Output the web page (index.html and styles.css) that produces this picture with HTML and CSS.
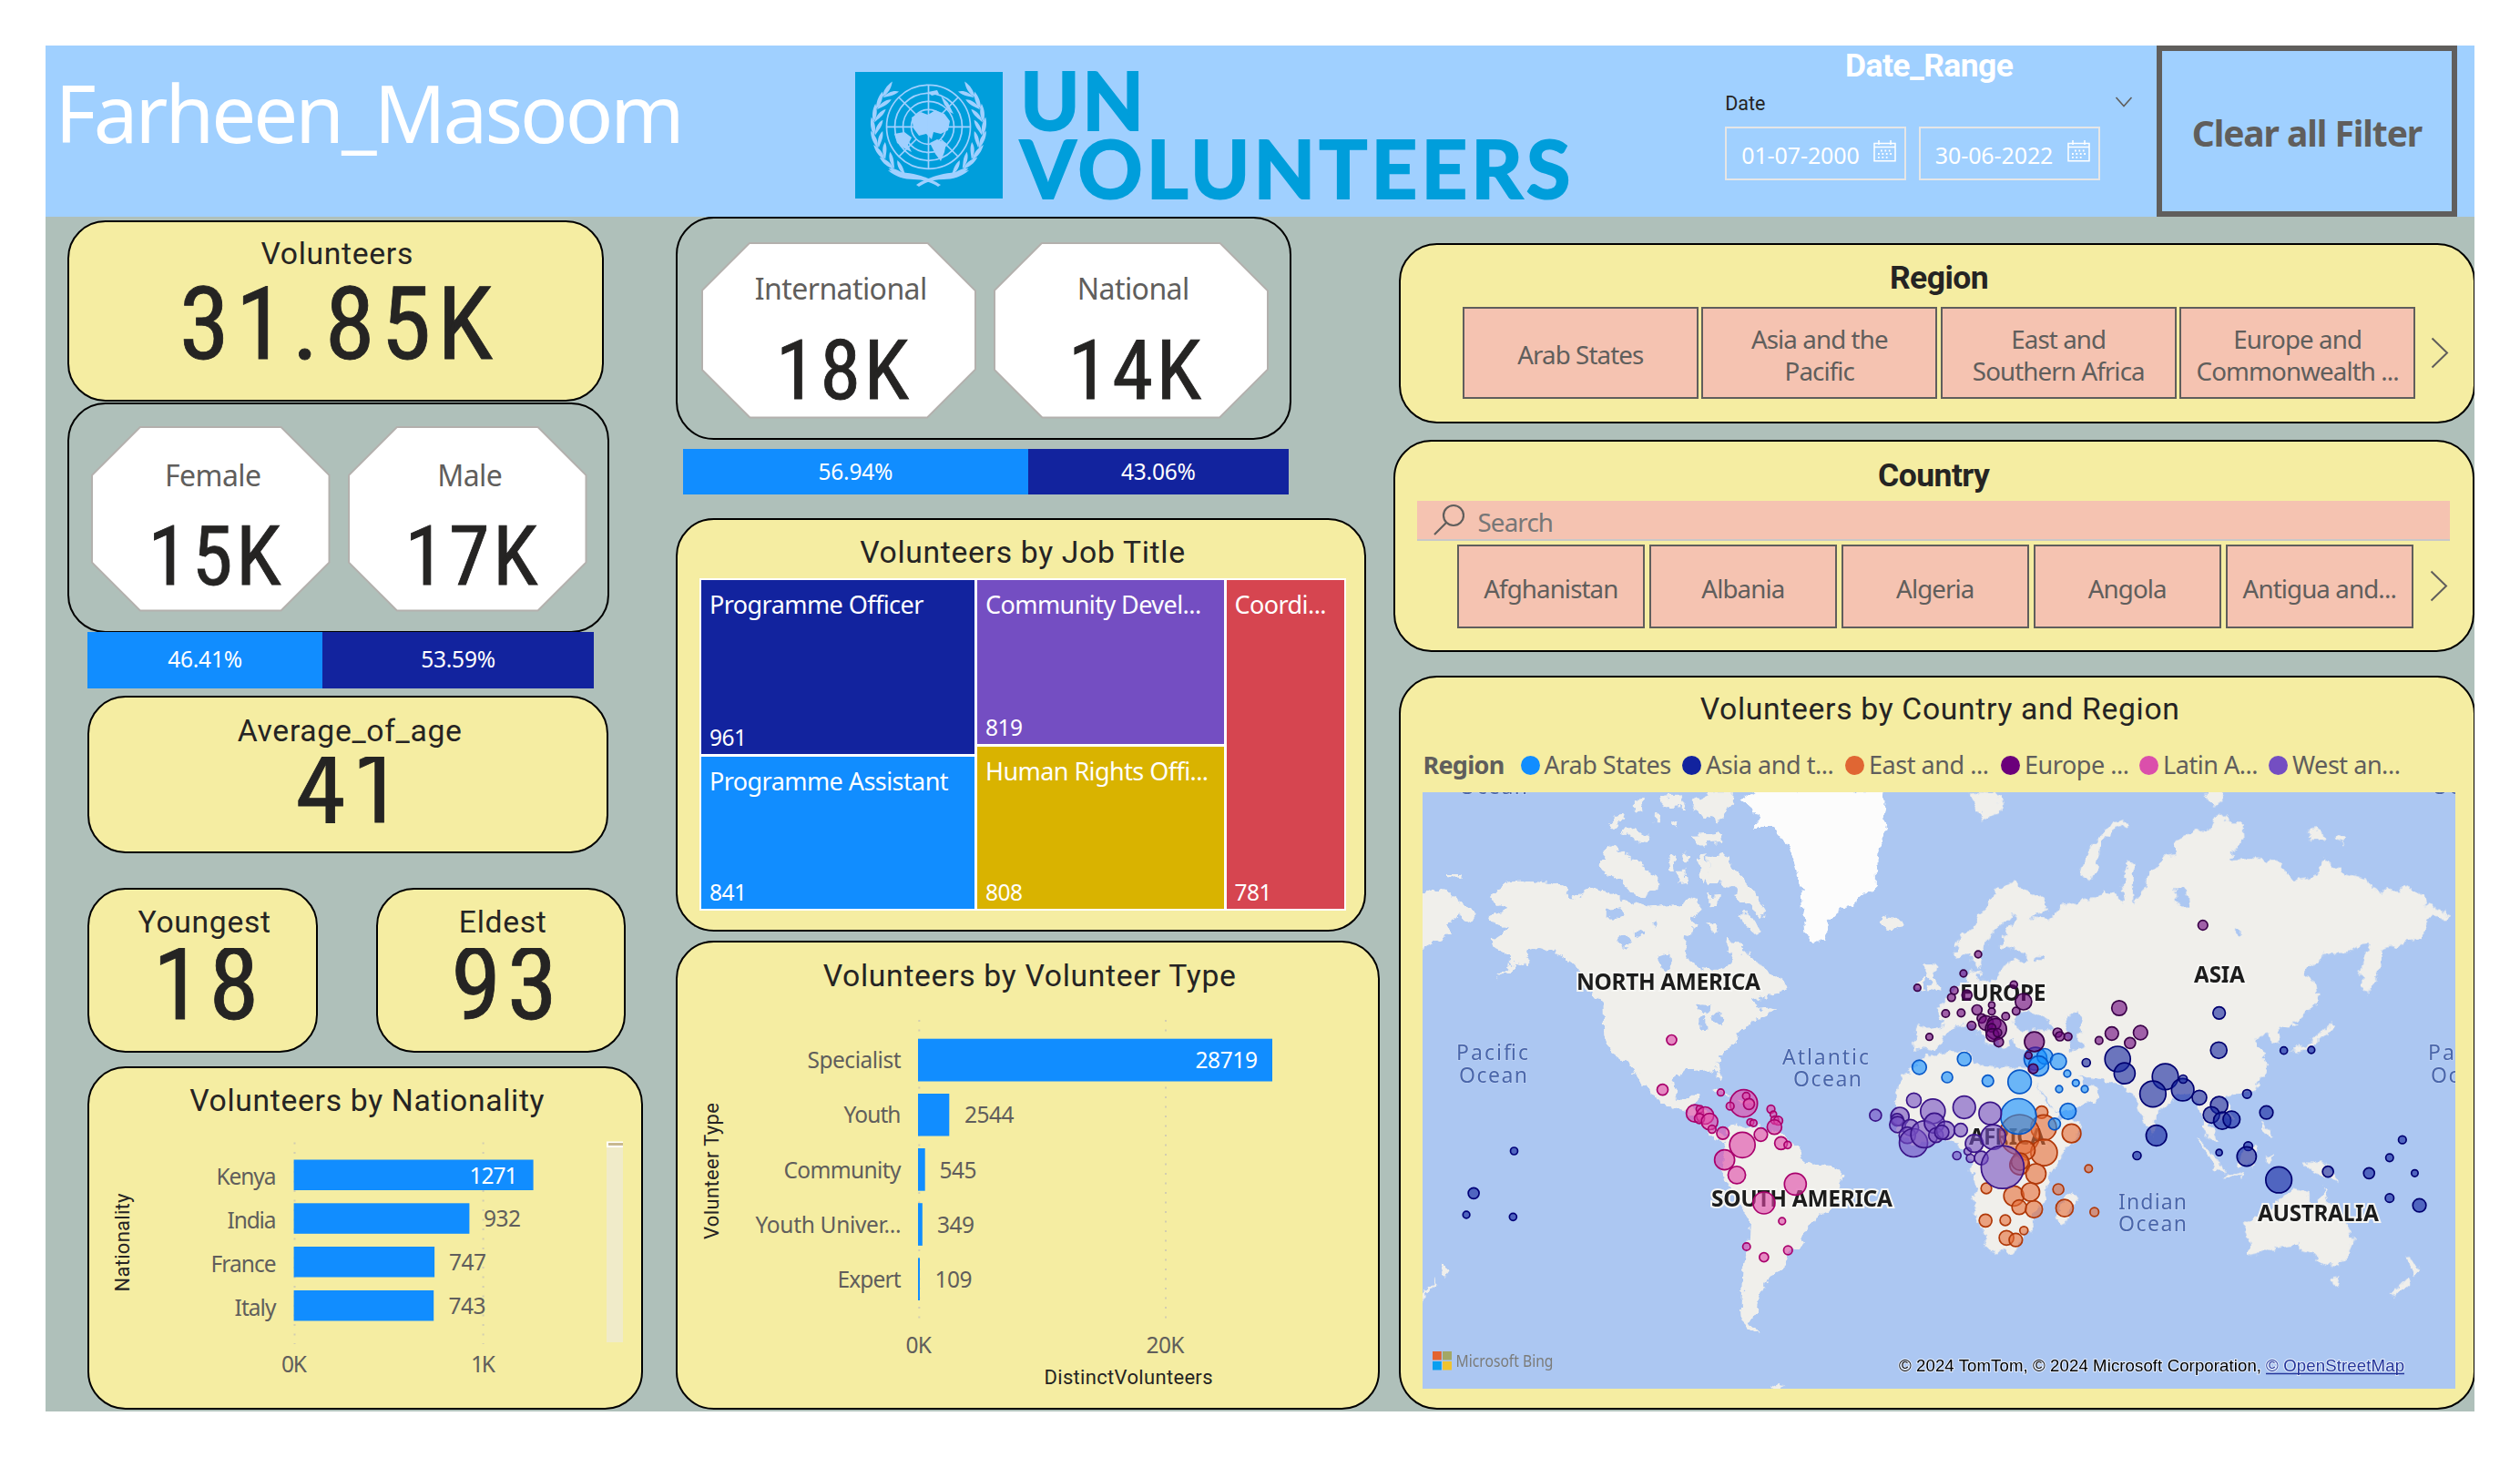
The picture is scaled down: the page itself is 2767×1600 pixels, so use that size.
FILE: index.html
```html
<!DOCTYPE html>
<html lang="en">
<head>
<meta charset="utf-8">
<title>UN Volunteers</title>
<link rel="stylesheet" href="styles.css">
</head>
<body>
<main class="report">
  <header class="header">
    <h1 class="owner">Farheen_Masoom</h1>
    <div class="logo">
      <svg class="emblem" viewBox="0 0 162 139">
        <rect width="162" height="139" fill="#009edb"/>
        <defs>
          <path id="leaf" d="M22 76 C18 70 16 64 17 56 C22 62 24 69 22 76Z M23 76 C26 70 30 66 30 58 C25 61 22 68 23 76Z"/>
          <g id="branch">
            <use href="#leaf" transform="rotate(48 80 60)"/>
            <use href="#leaf" transform="rotate(34 80 60)"/>
            <use href="#leaf" transform="rotate(20 80 60)"/>
            <use href="#leaf" transform="rotate(6 80 60)"/>
            <use href="#leaf" transform="rotate(-8 80 60)"/>
            <use href="#leaf" transform="rotate(-22 80 60)"/>
            <use href="#leaf" transform="rotate(-36 80 60)"/>
            <use href="#leaf" transform="rotate(-50 80 60)"/>
            <path d="M36 108 C50 110 62 111 72 114 C82 117 90 121 94 124 L91 126 C84 121 74 118 64 118 C54 118 44 115 36 108Z"/>
          </g>
        </defs>
        <g fill="#a0d0ff">
          <use href="#branch"/>
          <use href="#branch" transform="matrix(-1 0 0 1 161 0)"/>
          <path d="M62 50 L72 44 80 47 88 42 98 46 104 54 102 64 94 68 86 66 84 74 78 68 70 70 64 62Z M43 68 L54 66 62 72 58 80 62 88 54 84 46 78Z M82 78 L90 74 100 78 98 88 94 98 88 90Z M94 26 L102 34 108 46 104 44 98 36Z M80 22 L90 20 92 24 84 26Z"/>
        </g>
        <g fill="none" stroke="#a0d0ff" stroke-width="1.7">
          <circle cx="80.5" cy="60.3" r="46"/><circle cx="80.5" cy="60.3" r="37"/><circle cx="80.5" cy="60.3" r="28"/><circle cx="80.5" cy="60.3" r="19"/>
          <path d="M80.5 14V107M34 60.3H127M48 28L67 47M113 28L94 47M48 93L67 74M113 93L94 74"/>
        </g>
      </svg>
      <div class="wordmark"><span>UN</span><span class="wide">VOLUNTEERS</span></div>
    </div>
    <section class="dates">
      <h2 class="slicer-title light">Date_Range</h2>
      <div class="dates-field"><span>Date</span>
        <svg width="20" height="12" viewBox="0 0 20 12"><path d="M1.5 1L10 10.5L18.5 1" fill="none" stroke="#605e5c" stroke-width="1.6"/></svg>
      </div>
      <div class="dates-inputs">
        <div class="date-input"><span>01-07-2000</span><svg class="calendar" viewBox="0 0 25 24"><path d="M1 3.5H24V22.800H1ZM1 7.500H24M6 0V5M19 0V5" fill="none" stroke="#fff" stroke-width="1.500"/><path d="M8 11.500H21M5 15H21M5 18.800H17" stroke="#fff" stroke-width="1.800" stroke-dasharray="1.800 2.600"/></svg></div>
        <div class="date-input"><span>30-06-2022</span><svg class="calendar" viewBox="0 0 25 24"><path d="M1 3.5H24V22.800H1ZM1 7.500H24M6 0V5M19 0V5" fill="none" stroke="#fff" stroke-width="1.500"/><path d="M8 11.500H21M5 15H21M5 18.800H17" stroke="#fff" stroke-width="1.800" stroke-dasharray="1.800 2.600"/></svg></div>
      </div>
    </section>
    <button class="clear">Clear all Filter</button>
  </header>

  <div class="columns">
    <div class="col col-left">
      <section class="card volunteers">
        <h2 class="title">Volunteers</h2>
        <p class="figure">31.85K</p>
      </section>
      <section class="card plain gender">
        <div class="octagon"><span class="oct-label">Female</span><span class="oct-value">15K</span></div>
        <div class="octagon"><span class="oct-label">Male</span><span class="oct-value">17K</span></div>
      </section>
      <div class="split split-gender"><span style="flex-grow:46.41">46.41%</span><span style="flex-grow:53.59">53.59%</span></div>
      <section class="card average">
        <h2 class="title">Average_of_age</h2>
        <p class="figure cut">41</p>
      </section>
      <div class="ages">
        <section class="card youngest"><h2 class="title">Youngest</h2><p class="figure cut">18</p></section>
        <section class="card eldest"><h2 class="title">Eldest</h2><p class="figure cut">93</p></section>
      </div>
      <section class="card nationality">
        <h2 class="title">Volunteers by Nationality</h2>
        <svg class="chart" viewBox="98 1230 606 316">
          <path class="grid" d="M323.500 1254.600V1476M530.600 1254.600V1476"/>
          <g fill="#118dff">
            <rect x="322.600" y="1273.500" width="263" height="33.500"/>
            <rect x="322.600" y="1321.300" width="192.800" height="33.500"/>
            <rect x="322.600" y="1369" width="154.500" height="33.500"/>
            <rect x="322.600" y="1417" width="153.600" height="33.500"/>
          </g>
          <g class="axis" text-anchor="end">
            <text x="303.500" y="1301" textLength="66">Kenya</text>
            <text x="303.500" y="1348.700" textLength="54">India</text>
            <text x="303.500" y="1396.500" textLength="72">France</text>
            <text x="303.500" y="1444.800" textLength="46">Italy</text>
          </g>
          <g class="axis">
            <text x="515.500" y="1299.500" textLength="53" fill="#fff">1271</text>
            <text x="531" y="1347" textLength="41">932</text>
            <text x="493" y="1395" textLength="41">747</text>
            <text x="492.500" y="1442.700" textLength="41">743</text>
            <text x="309" y="1506.500" textLength="28">0K</text>
            <text x="517" y="1506.500" textLength="27">1K</text>
          </g>
          <text class="axis-title" transform="translate(142 1418.500) rotate(-90)" textLength="108">Nationality</text>
          <rect x="666" y="1260" width="18" height="214" fill="#f0ebc9"/>
          <path d="M666 1253.500H684V1260H666Z" fill="#fff"/><path d="M668 1255H684V1258H668Z" fill="#c8b890"/>
        </svg>
      </section>
    </div>

    <div class="col col-middle">
      <section class="card plain scope">
        <div class="octagon big"><span class="oct-label">International</span><span class="oct-value">18K</span></div>
        <div class="octagon big"><span class="oct-label">National</span><span class="oct-value">14K</span></div>
      </section>
      <div class="split split-scope"><span style="flex-grow:56.94">56.94%</span><span style="flex-grow:43.06">43.06%</span></div>
      <section class="card jobs">
        <h2 class="title">Volunteers by Job Title</h2>
        <div class="treemap">
          <div class="tree-col one"><div class="cell navy"><span>Programme Officer</span><b>961</b></div><div class="cell blue"><span>Programme Assistant</span><b>841</b></div></div>
          <div class="tree-col two"><div class="cell violet"><span>Community Devel...</span><b>819</b></div><div class="cell gold"><span>Human Rights Offi...</span><b>808</b></div></div>
          <div class="tree-col three"><div class="cell red"><span>Coordi...</span><b>781</b></div></div>
        </div>
      </section>
      <section class="card types">
        <h2 class="title">Volunteers by Volunteer Type</h2>
        <svg class="chart" viewBox="744 1095 769 450">
          <path class="grid" d="M1009.300 1120V1455M1280 1120V1455"/>
          <g fill="#118dff">
            <rect x="1008" y="1140.700" width="389" height="46.800"/>
            <rect x="1008" y="1201" width="34.300" height="46.500"/>
            <rect x="1008" y="1261" width="7.700" height="46.700"/>
            <rect x="1008" y="1321.200" width="4.800" height="46.700"/>
            <rect x="1008" y="1381.400" width="2" height="46.600"/>
          </g>
          <g class="axis" text-anchor="end">
            <text x="989.500" y="1173.300" textLength="103">Specialist</text>
            <text x="989.500" y="1233.300" textLength="63">Youth</text>
            <text x="989.500" y="1293.700" textLength="129">Community</text>
            <text x="989.500" y="1354" textLength="160">Youth Univer...</text>
            <text x="989.500" y="1414" textLength="70">Expert</text>
          </g>
          <g class="axis">
            <text x="1312.500" y="1173.300" textLength="68.500" fill="#fff">28719</text>
            <text x="1059" y="1233.300" textLength="54.500">2544</text>
            <text x="1031.500" y="1293.700" textLength="41">545</text>
            <text x="1029" y="1354" textLength="41">349</text>
            <text x="1026.500" y="1414" textLength="41">109</text>
            <text x="994.500" y="1485.500" textLength="28.500">0K</text>
            <text x="1258.500" y="1485.500" textLength="42">20K</text>
          </g>
          <text class="axis-title" transform="translate(788.500 1361) rotate(-90)" textLength="150">Volunteer Type</text>
          <text class="axis-title" x="1146.500" y="1520" textLength="185">DistinctVolunteers</text>
        </svg>
      </section>
    </div>

    <div class="col col-right">
      <section class="card region">
        <h2 class="slicer-title">Region</h2>
        <div class="tiles">
          <span>Arab States</span><span>Asia and the<br>Pacific</span><span>East and<br>Southern Africa</span><span>Europe and<br>Commonwealth ...</span>
          <svg class="next" viewBox="0 0 20 35"><path d="M1.500 1.500L18 17.500L1.500 33.500" fill="none" stroke="#605e5c" stroke-width="2"/></svg>
        </div>
      </section>
      <section class="card country">
        <h2 class="slicer-title">Country</h2>
        <div class="search">
          <svg width="34" height="36" viewBox="0 0 34 36"><circle cx="22" cy="13" r="11" fill="none" stroke="#605e5c" stroke-width="2.200"/><path d="M14 21L1 34" stroke="#605e5c" stroke-width="2.200"/></svg>
          <span>Search</span>
        </div>
        <div class="tiles five">
          <span>Afghanistan</span><span>Albania</span><span>Algeria</span><span>Angola</span><span>Antigua and...</span>
          <svg class="next" viewBox="0 0 20 35"><path d="M1.500 1.500L18 17.500L1.500 33.500" fill="none" stroke="#605e5c" stroke-width="2"/></svg>
        </div>
      </section>
      <section class="card world">
        <h2 class="title">Volunteers by Country and Region</h2>
        <div class="legend">
          <strong>Region</strong>
          <span><i class="k-arab"></i>Arab States</span><span><i class="k-asia"></i>Asia and t...</span><span><i class="k-east"></i>East and ...</span><span><i class="k-europe"></i>Europe ...</span><span><i class="k-latin"></i>Latin A...</span><span><i class="k-west"></i>West an...</span>
        </div>
        <svg class="map" id="map" viewBox="0 0 1134 655">
          <defs>
            <filter id="coast" x="0" y="0" width="1134" height="655" filterUnits="userSpaceOnUse">
              <feTurbulence type="fractalNoise" baseFrequency="0.09" numOctaves="3" seed="4"/>
              <feDisplacementMap in="SourceGraphic" scale="13" xChannelSelector="R" yChannelSelector="G"/>
              <feGaussianBlur stdDeviation="0.6"/>
            </filter>
          </defs>
          <rect width="1134" height="655" fill="#acc7f2"/>
          <g filter="url(#coast)">
            <g fill="#f0efeb" transform="translate(-12 -10) scale(.38265 .33333)">
              <path d="M225 380L245 350 285 325 330 322 400 330 440 350 465 380 480 370 510 350 540 355 580 365 600 380 640 395 680 410 720 405 760 400 800 375 820 385 830 420 800 450 820 470 790 500 785 550 800 590 840 610 880 615 905 610 920 590 905 550 910 515 935 520 960 560 975 585 1010 600 1030 620 1060 650 1075 670 1060 690 1020 700 980 720 1000 740 1040 735 1020 770 980 780 960 810 935 825 925 860 890 895 872 915 875 940 888 975 882 985 870 950 850 938 810 945 780 945 757 965 750 1000 760 1035 790 1045 805 1025 828 1025 825 1050 800 1068 850 1075 860 1090 862 1135 880 1150 900 1165 925 1150 925 1165 895 1185 865 1165 840 1130 800 1090 770 1080 740 1065 700 1040 690 1020 650 975 630 940 610 915 570 880 552 830 550 720 520 700 490 650 470 600 440 570 400 550 370 540 340 550 325 600 300 590 285 615 240 640 290 590 290 570 240 540 225 520 265 490 275 470 220 455 225 435 270 420Z"/>
              <path d="M20 370L60 345 100 350 125 380 165 410 185 430 170 455 130 430 105 470 110 500 70 520 20 550Z"/>
              <path d="M548 225L570 205 610 225 650 265 690 290 715 330 700 345 660 375 630 360 600 320 560 305 545 280Z"/>
              <path d="M850 250L900 235 935 290 960 330 990 370 1020 420 1000 440 960 400 920 340 880 330 850 330Z"/>
              <path d="M940 430L970 430 1005 490 990 500 950 460Z M820 240L845 235 855 320 830 330Z M760 290L785 290 790 330 765 335Z M730 240L750 235 755 290 735 285Z M780 230L805 230 800 260 785 262Z M850 370L880 365 875 410 850 405Z M845 460L870 460 880 495 855 490Z"/>
              <path d="M800 60L860 28 925 28 920 70 905 90 880 130 840 120 820 90Z M810 170L880 165 890 195 820 200Z M640 55L660 50 665 90 640 95Z M565 140L600 95 610 110 580 150Z M600 160L640 150 690 180 680 195 640 190Z M710 45L770 40 790 80 740 85 715 70Z M700 100L720 95 715 130 700 130Z M740 120L770 130 760 150 740 145Z"/>
              <path d="M1475 600L1495 595 1492 630 1515 680 1505 692 1478 685 1490 655 1475 640Z M1450 650L1470 640 1470 680 1448 685Z"/>
              <path d="M860 1008L910 1022 915 1030 870 1018Z M935 1040L985 1045 980 1060 940 1055Z M105 300L140 300 140 312 108 310Z"/>
              <path d="M895 1205L915 1130 940 1125 960 1140 1000 1130 1050 1150 1090 1180 1120 1210 1125 1250 1180 1255 1225 1275 1240 1300 1220 1345 1200 1410 1150 1440 1130 1480 1110 1535 1085 1545 1065 1600 1030 1620 1020 1650 1000 1700 990 1740 970 1775 1000 1818 980 1812 948 1775 945 1700 950 1600 965 1530 970 1440 930 1370 900 1310 890 1270Z"/>
              <path d="M92 1580L105 1600 90 1625 78 1615Z M70 1630L28 1690 30 1705 68 1650Z M1030 1990L1060 1970 1070 1990 1040 2000Z"/>
              <ellipse cx="1375" cy="460" rx="30" ry="24"/>
              <path fill="#fcfcfc" d="M945 55L985 25 1358 25 1350 110 1362 140 1340 220 1335 290 1335 345 1290 370 1260 400 1220 430 1195 460 1182 522 1150 525 1130 490 1125 430 1120 350 1095 260 1070 190 1040 150 980 150 1000 110Z"/>
            </g>
            <g fill="#f0efeb" transform="translate(488 -10) scale(.42535 .33333)">
              <path d="M125 830L130 795 190 810 195 780 175 740 190 730 215 700 235 680 260 660 262 625 285 620 295 655 330 645 345 620 360 595 405 580 405 558 350 545 345 500 370 480 385 440 372 430 345 470 320 500 305 540 300 580 285 610 270 590 265 560 240 580 228 560 240 500 275 475 290 430 315 390 340 345 375 325 415 355 460 385 470 420 440 430 420 440 470 450 490 430 500 400 545 390 600 380 615 350 640 375 665 395 658 300 675 255 690 270 692 400 720 330 725 290 755 270 760 240 800 230 795 195 850 160 885 155 905 95 935 130 970 130 972 180 945 220 930 250 1000 245 1065 255 1080 300 1110 315 1160 305 1180 245 1220 295 1290 320 1300 350 1340 360 1400 345 1440 370 1445 400 1505 435 1495 445 1460 440 1440 470 1435 510 1400 520 1360 540 1330 550 1320 640 1290 690 1275 680 1275 620 1290 560 1300 525 1280 530 1240 560 1180 560 1150 600 1130 635 1160 660 1165 700 1150 740 1120 770 1085 800 1060 820 1062 855 1045 850 1040 830 1010 835 1000 850 1020 880 1030 930 1020 980 1000 1005 960 1020 930 1030 920 1045 945 1080 938 1110 900 1100 885 1130 910 1185 895 1185 870 1140 865 1090 850 1060 830 1020 800 1025 775 1060 750 1090 745 1140 735 1160 720 1130 700 1060 690 1020 670 1000 620 980 580 975 545 965 560 990 600 1010 590 1040 540 1075 502 1092 480 1080 460 1030 425 970 420 935 425 890 385 875 380 840 365 870 345 862 330 850 300 800 318 830 325 855 310 862 280 810 260 795 225 800 200 830 185 868 160 880 125 870Z"/>
              <path d="M655 120L668 135 610 190 592 260 580 322 550 300 570 220 610 160Z M265 30L340 40 350 90 300 122 280 80Z M880 28L915 28 918 60 890 75Z M1145 155L1170 150 1180 185 1150 190Z M1210 175L1235 180 1230 195 1212 190Z"/>
              <path d="M1200 790L1204 805 1150 868 1110 885 1088 880 1140 860Z M1092 785L1112 795 1100 808Z M155 600L175 595 172 630 190 685 150 688 165 655Z"/>
              <path d="M150 895L200 890 262 880 275 920 330 940 400 930 425 950 440 1000 470 1065 502 1108 556 1105 548 1150 500 1230 465 1300 462 1370 425 1425 428 1465 402 1505 370 1545 318 1552 300 1485 270 1385 282 1330 265 1250 255 1205 200 1178 130 1195 82 1155 70 1100 75 1020 95 965 130 930Z"/>
              <path d="M530 1345L540 1360 515 1450 500 1460 488 1425 508 1370Z"/>
              <path d="M978 1450L1035 1420 1065 1380 1100 1340 1140 1350 1140 1385 1165 1400 1178 1330 1192 1370 1205 1400 1240 1460 1255 1500 1240 1570 1215 1595 1180 1590 1150 1550 1120 1540 1110 1518 1060 1528 1010 1550 990 1555 985 1500Z"/>
              <path d="M1195 1630L1220 1628 1212 1655 1198 1652Z M1395 1560L1425 1592 1410 1628 1402 1600Z M1392 1635L1350 1690 1365 1695 1400 1650Z M1120 1250L1170 1250 1205 1280 1215 1310 1180 1300 1140 1270Z M855 1175L880 1200 912 1250 922 1282 905 1275 880 1230Z M925 1283L970 1288 970 1297 925 1293Z M960 1230L1005 1185 1012 1210 1000 1262 965 1260Z M1020 1120L1040 1140 1045 1170 1025 1150Z M1030 1225L1050 1225 1035 1265 1028 1260Z"/>
              <g fill="#acc7f2">
                <path d="M375 795L385 760 420 745 440 760 472 792 478 812 440 812 400 822Z M505 772L540 755 560 780 545 830 562 870 530 880 515 830Z M795 350L825 350 830 405 800 400Z M950 475L965 480 965 510 950 505Z M438 570L455 570 455 585 440 585Z"/>
              </g>
            </g>
            <g fill="#acc7f2" transform="translate(-12 -10) scale(.38265 .33333)">
              <path d="M555 420L600 415 610 435 580 450Z M640 490L665 485 670 500 640 510Z M710 570L735 560 740 620 715 610Z M815 730L850 735 860 755 825 760Z M832 765L845 765 845 810 832 810Z M865 755L900 770 890 800 870 780Z M600 500L620 510 615 540 600 530Z M690 460L710 455 700 480Z"/>
            </g>
          </g>
          <g class="ocean">
            <text x="37" y="294" textLength="79">Pacific</text><text x="40" y="319" textLength="75">Ocean</text>
            <text x="395" y="298.500" textLength="95">Atlantic</text><text x="407" y="323" textLength="75">Ocean</text>
            <text x="764" y="457.500" textLength="75">Indian</text><text x="764" y="481.700" textLength="75">Ocean</text>
            <text x="1104" y="294" textLength="79">Pacific</text><text x="1107" y="319" textLength="75">Ocean</text>
            <text x="40" y="1.500" textLength="75">Ocean</text><text x="1108" y="1.500" textLength="75">Ocean</text>
          </g>
          <g class="continent">
            <text x="169" y="216.700" textLength="202">NORTH AMERICA</text>
            <text x="317" y="454.500" textLength="199">SOUTH AMERICA</text>
            <text x="590" y="228.700" textLength="94.500">EUROPE</text>
            <text x="847" y="208.700" textLength="56">ASIA</text>
            <text x="600" y="387.300" textLength="84">AFRICA</text>
            <text x="917" y="470.700" textLength="133">AUSTRALIA</text>
          </g>
          <g id="bubbles"></g>
          <path d="M11 614H20.800V623.500H11Z" fill="#e3632f"/><path d="M22 614H32V623.500H22Z" fill="#a3a765"/><path d="M11 625H20.800V634.500H11Z" fill="#0a9ff0"/><path d="M22 625H32V634.500H22Z" fill="#f0c330"/>
          <text class="bing" x="36.500" y="630.700" textLength="107" lengthAdjust="spacingAndGlyphs">Microsoft Bing</text>
          <g class="credit">
            <text x="523" y="636" textLength="398">© 2024 TomTom, © 2024 Microsoft Corporation,</text>
            <text class="link" x="926" y="636" textLength="152">© OpenStreetMap</text>
            <path d="M926 638.500H1078" stroke="#26379c" stroke-width="1.300"/>
          </g>
        </svg>
      </section>
    </div>
  </div>
</main>
<script src="bubbles.js"></script>
</body>
</html>
```
FILE: bubbles.js
```js
// Volunteer bubbles. Each hemisphere has its own grid: [x, y, radius in px].
const grids = {
  west: (x, y) => [x / 2.6133 - 12, y / 3 - 10],
  east: (x, y) => [x / 2.351 + 488, y / 3 - 10]
};
const layers = [
  { grid: 'west', fill: '#e044a7', line: '#a8006c', points: [
    [746,846,5.5],[720,1010,6],[887,1019,3.8],[953,1055,15],[960,1031,4],[968,1057,6],[914,1064,4.3],[813,1088,9.5],[827,1074,4],[842,1095,9.5],[826,1105,5.5],[855,1115,9],[862,1140,4.3],[893,1153,6.8],[972,1117,3.8],[981,1120,3.8],[1031,1074,4.3],[1038,1091,3.5],[1042,1110,4.3],[1052,1112,4.8],[1041,1133,8],[1002,1158,7.3],[1060,1186,7],[1079,1192,4],[949,1192,14],[898,1241,11],[933,1291,9.6],[1101,1321,12],[1011,1383,12],[1063,1443,3.8],[961,1527,4.2],[1080,1539,4.8],[1011,1562,5]] },
  { grid: 'west', fill: '#12239e', line: '#000078', points: [[294,1212,4],[178,1351,6],[157,1422,3.8],[291,1429,4]] },
  { grid: 'east', fill: '#e66c37', line: '#b03808', points: [
    [451,1084,6.8],[456,1135,14],[528,1154,10.3],[394,1158,22],[457,1217,14.5],[409,1210,10.5],[394,1258,10.8],[395,1247,9.5],[436,1287,11],[308,1335,5.8],[572,1270,4.2],[494,1338,6],[379,1360,11],[422,1347,10],[393,1397,8],[431,1404,9.3],[510,1400,9.5],[587,1413,4.8],[306,1441,7],[357,1440,5.8],[405,1474,4.5],[360,1498,8],[384,1505,7.3]] },
  { grid: 'east', fill: '#118dff', line: '#0858c8', points: [
    [135,936,7.8],[207,969,6],[251,909,7.5],[312,981,6.3],[394,984,12.8],[391,1098,19.5],[435,908,12.5],[459,900,8.5],[443,932,11],[494,917,8.8],[517,957,3.8],[539,988,3.8],[562,1008,3.8],[496,1008,3.8],[519,1081,8.8],[484,1123,6.5]] },
  { grid: 'east', fill: '#744ec2', line: '#3a1488', points: [
    [22,1094,6.5],[121,1045,8],[170,1081,13.5],[251,1068,12.3],[318,1088,12.3],[85,1098,10],[78,1109,6.8],[79,1125,8.8],[112,1135,9],[104,1160,9],[120,1185,15.5],[148,1157,14.8],[174,1120,11],[178,1160,8],[203,1144,10],[193,1150,7.8],[242,1143,7.3],[232,1227,4.5],[260,1213,4],[267,1236,4.5],[295,1235,7.5],[277,1187,9.8],[326,1166,13.5],[350,1265,23.5]] },
  { grid: 'east', fill: '#12239e', line: '#000070', points: [
    [909,757,6.8],[908,880,9],[1076,881,4],[1147,879,3.8],[566,921,4.5],[647,909,14],[665,956,11.5],[770,967,14.3],[738,1024,14.3],[815,1010,12.3],[816,975,4.5],[858,1036,8],[981,1024,4.8],[909,1061,9.5],[889,1093,9],[917,1112,9.5],[941,1108,9.3],[1031,1085,7.3],[747,1161,11.3],[697,1227,4.5],[984,1196,4.8],[909,1217,3.5],[980,1230,10.6],[1063,1307,14.3],[1190,1280,6],[1296,1285,6],[1382,1175,4.3],[1349,1234,4.2],[1414,1285,3.7],[1349,1367,4.7],[1426,1391,7.3]] },
  { grid: 'east', fill: '#6b007b', line: '#3a0048', points: [
    [867,468,5.3],[287,564,3.8],[249,627,3.8],[130,674,3.8],[225,683,4.3],[218,706,4.3],[258,698,5.5],[379,664,4],[404,720,9],[322,731,3.5],[284,747,5.5],[322,752,3.8],[203,759,4.2],[243,757,4.2],[385,751,4.2],[358,768,4.2],[296,775,5],[270,799,4.7],[307,790,8],[328,791,7.5],[333,810,11.5],[322,806,4.5],[324,830,7],[337,822,4.5],[340,853,5.2],[161,836,3.8],[432,852,10.8],[492,822,5],[498,834,5],[519,835,4.3],[599,848,4.2],[632,825,7.3],[651,741,8.2],[706,822,7.8],[679,856,6],[417,897,3.8],[429,941,5.3]] }
];
const host = document.getElementById('bubbles');
for (const { grid, fill, line, points } of layers) {
  for (const [x, y, r] of points) {
    const [cx, cy] = grids[grid](x, y);
    const c = document.createElementNS('http://www.w3.org/2000/svg', 'circle');
    c.setAttribute('cx', cx); c.setAttribute('cy', cy); c.setAttribute('r', r);
    c.setAttribute('fill', fill); c.setAttribute('stroke', line);
    host.append(c);
  }
}
```
FILE: styles.css
```css
* { box-sizing: border-box; }
body { margin: 0; background: #fff; font-family: "Noto Sans", "Open Sans", sans-serif; color: #605e5c; }
h1, h2, p { margin: 0; font-weight: 400; }
svg { display: block; flex: none; }

.report { width: 2667px; height: 1500px; margin: 50px; background: #afc0ba; overflow: hidden; }

.header { display: flex; height: 187.500px; background: #a0d0ff; }
.owner { width: 888.700px; padding-left: 10.500px; color: #fff; font-size: 87px; line-height: 146px; letter-spacing: -.0345em; }
.logo { display: flex; width: 955.500px; padding-top: 29px; }
.emblem { width: 162px; height: 139px; }
.wordmark { display: flex; flex-direction: column; margin: -7.500px 0 0 19.500px; color: #009edb; font: 700 88px/75px Lato, sans-serif; -webkit-text-stroke: 2.200px #009edb; }
.wordmark span { letter-spacing: .03em; }
.wordmark .wide { letter-spacing: .048em; }

.dates { width: 448px; padding-top: 2px; }
.slicer-title { font: 700 35.500px/40px Roboto, sans-serif; letter-spacing: -.016em; text-align: center; color: #252423; }
.slicer-title.light { color: #fff; }
.dates-field { display: flex; justify-content: space-between; align-items: center; height: 30px; margin-top: 7px; color: #252423; font: 400 21.500px/30px Roboto, sans-serif; }
.dates-field svg { margin-top: -5px; }
.dates-inputs { display: flex; gap: 13.300px; margin-top: 10px; }
.date-input { display: flex; justify-content: space-between; width: 199.300px; height: 59px; padding: 0 9px 0 16px; border: 2px solid #e6e6e6; color: #fff; font-size: 25px; line-height: 58px; letter-spacing: -.004em; }
.calendar { width: 25px; height: 24px; margin-top: 13px; }
.clear { width: 330.500px; height: 188px; margin-left: 25.500px; padding: 3px 0 0; border: 6.500px solid #605e5c; background: none; color: #605e5c; font: 700 39px/1 "Noto Sans", sans-serif; letter-spacing: -.028em; }

.columns { display: flex; }
.col { display: flex; flex-direction: column; align-items: flex-start; flex: none; }
.col-left { width: 692px; padding: 4.500px 0 0 23.500px; }
.col-middle { width: 787.500px; }
.col-right { width: 1187.500px; padding-top: 29.500px; }

.card { flex: none; border: 2px solid #000; border-radius: 41.700px; background: #f5eda2; }
.card.plain { display: flex; align-items: flex-start; background: none; }
.title { color: #252423; font: 400 33.700px/40px Roboto, sans-serif; letter-spacing: .02em; padding-left: .13em; text-align: center; white-space: nowrap; }
.figure { color: #252423; font: 400 112px/80px "Roboto Condensed", Roboto, sans-serif; letter-spacing: .058em; padding-left: .075em; text-align: center; -webkit-text-stroke: .800px #252423; }
.figure.cut { overflow: hidden; }
.chart { width: 100%; }

.volunteers { width: 589px; height: 199px; padding-top: 15.300px; }
.volunteers .figure { margin-top: 17px; }
.gender { width: 595px; height: 252.500px; margin-top: 1px; padding: 24px 0 0 24.500px; gap: 19.500px; }
.average { width: 572px; height: 172.500px; margin: 8.800px 0 0 22.500px; padding-top: 16.500px; }
.average .figure { height: 80px; margin-top: 8px; line-height: 68px; }
.ages { display: flex; gap: 64px; margin: 38px 0 0 22.500px; }
.youngest { width: 253px; height: 181px; padding-top: 15.700px; }
.eldest { width: 274px; height: 181px; padding-top: 15.700px; }
.ages .figure { height: 90px; margin-top: 8.300px; padding-left: .12em; line-height: 79px; }
.nationality { width: 610px; height: 377px; margin: 15px 0 0 22.500px; padding-top: 16px; }
.nationality .chart { margin-top: 1px; }

.octagon { position: relative; display: flex; flex-direction: column; align-items: center; width: 262.500px; height: 203.500px; padding-top: 33.500px; background: #b3b0ad; clip-path: polygon(53.500px 0, calc(100% - 53.500px) 0, 100% 53.500px, 100% calc(100% - 53.500px), calc(100% - 53.500px) 100%, 53.500px 100%, 0 calc(100% - 53.500px), 0 53.500px); }
.octagon::before { content: ""; position: absolute; inset: 2px; background: #fff; clip-path: polygon(52.300px 0, calc(100% - 52.300px) 0, 100% 52.300px, 100% calc(100% - 52.300px), calc(100% - 52.300px) 100%, 52.300px 100%, 0 calc(100% - 52.300px), 0 52.300px); }
.octagon span { position: relative; }
.octagon.big { width: 302.500px; height: 194px; padding-top: 31.500px; }
.oct-label { padding-left: 5px; font-size: 32px; line-height: 40px; letter-spacing: -.018em; }
.oct-value { margin-top: 29.500px; padding-left: 12px; color: #252423; font: 400 91px/80px "Roboto Condensed", Roboto, sans-serif; letter-spacing: .038em; -webkit-text-stroke: .800px #252423; }

.split { display: flex; color: #fff; font-size: 24.500px; letter-spacing: -.01em; text-align: center; }
.split span { flex-basis: 0; background: #118dff; }
.split span + span { background: #12239e; }
.split-gender { width: 556px; height: 61.700px; margin: -.500px 0 0 22.500px; line-height: 60px; }
.split-scope { width: 665px; height: 50.500px; margin: 9.500px 0 0 8px; line-height: 50px; }

.scope { width: 676px; height: 245.500px; padding: 26px 0 0 25.500px; gap: 18.500px; }
.jobs { width: 757.500px; height: 454px; margin-top: 25.800px; padding-top: 16px; }
.treemap { display: flex; gap: 3px; width: 709.500px; height: 364.500px; margin: 8.600px 0 0 24px; padding: 2px; background: #fff; }
.tree-col { display: flex; flex-direction: column; gap: 3px; }
.one { width: 300px; } .two { width: 270.500px; } .three { flex: 1; }
.cell { display: flex; flex-direction: column; justify-content: space-between; flex: 1; padding: 9px 0 2px 9px; color: #fff; font-size: 27px; line-height: 36px; letter-spacing: -.021em; white-space: nowrap; }
.cell b { font-weight: 400; font-size: 24.500px; line-height: 32px; }
.navy { background: #12239e; flex: none; height: 191px; } .blue { background: #118dff; } .violet { background: #744ec2; flex: none; height: 180px; } .gold { background: #d9b300; } .red { background: #d64550; }

.types { width: 773px; height: 514.500px; margin-top: 10.300px; padding-top: 16.500px; }
.types .chart { margin-top: 3.500px; }

.grid { fill: none; stroke: #d2cdb0; stroke-width: 2; stroke-dasharray: 2 8.500; }
.axis text { font: 400 24.500px "Noto Sans", sans-serif; }
.axis { fill: #605e5c; }
.axis-title { fill: #252423; font: 400 22px Roboto, sans-serif; }

.region { width: 1181.500px; height: 198px; margin-left: 6.500px; padding-top: 16px; }
.region .slicer-title { width: 1182px; }
.tiles { display: flex; align-items: center; gap: 3.900px; height: 100.500px; margin: 12.300px 0 0 68px; }
.tiles span { display: flex; flex: none; align-items: center; justify-content: center; width: 258.600px; height: 100%; border: 2px solid #605e5c; background: #f5c3b1; font-size: 27.700px; line-height: 34.500px; letter-spacing: -.032em; text-align: center; white-space: nowrap; padding-top: 4px; }
.next { width: 20px; height: 35px; margin-left: 13px; }
.tiles.five { gap: 5.300px; height: 92px; margin: 4px 0 0 68.500px; }
.tiles.five span { width: 205.700px; padding-top: 5px; }
.country { width: 1187.500px; height: 233px; margin-top: 18.300px; padding-top: 17px; }
.search { display: flex; gap: 15px; width: 1134.500px; height: 44px; margin: 7.700px 0 0 24px; padding: 3px 0 0 18px; border-bottom: 2px solid #c8c8c8; background: #f5c3b1; color: #777; font-size: 27.700px; line-height: 40px; letter-spacing: -.03em; }
.world { width: 1181.500px; height: 806px; margin: 25.400px 0 0 6.500px; padding-top: 15.500px; }
.world .title { width: 1180px; }
.legend { display: grid; grid-template-columns: 107px 177.500px 179px 171px 152px 142px 150px; height: 36px; margin: 23px 0 0 24.500px; font-size: 27px; line-height: 36px; letter-spacing: -.017em; white-space: nowrap; }
.legend strong { letter-spacing: -.027em; }
.legend span { display: flex; align-items: center; gap: 5px; }
.legend i { width: 21px; height: 21px; border-radius: 50%; }
.k-arab { background: #118dff; } .k-asia { background: #12239e; } .k-east { background: #e06633; } .k-europe { background: #6b007b; } .k-latin { background: #db4fab; } .k-west { background: #744ec2; }

.map { width: 1134px; height: 655px; margin: 12px 0 0 23.500px; }
.map text { white-space: pre; }
.ocean { fill: #4a66aa; font-size: 23px; paint-order: stroke; stroke: #bfd3f5; stroke-width: 1.500; }
.continent { fill: #1c1c1c; font-size: 24.500px; font-weight: 700; paint-order: stroke; stroke: #f6f6f3; stroke-width: 4; }
#bubbles { stroke-width: 1.700; fill-opacity: .6; }
.bing { fill: #7b7b78; font-size: 17.500px; }
.credit { font: 400 18.600px "Liberation Sans", Arial, sans-serif; fill: #000; paint-order: stroke; stroke: #e4ecfa; stroke-width: 2; }
.link { fill: #26379c; }
```
